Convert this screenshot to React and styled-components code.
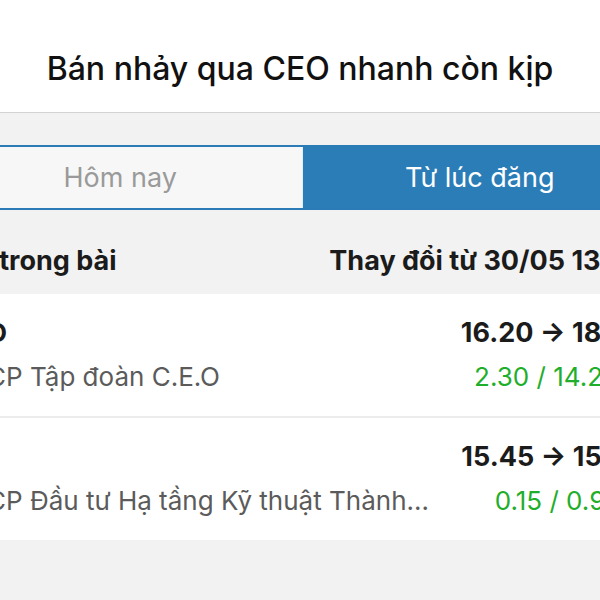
import React from 'react';
import styled, { createGlobalStyle } from 'styled-components';

const GlobalStyle = createGlobalStyle`
  body {
    margin: 0;
    background: #f2f2f2;
    font-family: Inter, "Noto Sans", sans-serif;
  }
`;

const stocks = [
  { code: 'CEO', name: 'CTCP Tập đoàn C.E.O', from: '16.20', to: '18.50', change: '2.30 / 14.20%' },
  { code: 'CII', name: 'CTCP Đầu tư Hạ tầng Kỹ thuật Thành phố Hồ Chí Minh', from: '15.45', to: '15.60', change: '0.15 / 0.97%' },
];

const App = () => {
  return (
    <Screen>
      <GlobalStyle />
      <TitleBar>
        <Title>Bán nhảy qua CEO nhanh còn kịp</Title>
      </TitleBar>
      <TabArea>
        <TabStrip>
          <Tab>Hôm nay</Tab>
          <Tab active>Từ lúc đăng</Tab>
        </TabStrip>
      </TabArea>
      <Table>
        <HeadRow>
          <HeadCell>Mã trong bài</HeadCell>
          <HeadCell right>Thay đổi từ 30/05 13:45</HeadCell>
        </HeadRow>
        {stocks.map((s) => (
          <Row key={s.code}>
            <LeftCol>
              <Code>{s.code}</Code>
              <Name>{s.name}</Name>
            </LeftCol>
            <RightCol>
              <Price>
                {s.from} → {s.to}
              </Price>
              <Change>{s.change}</Change>
            </RightCol>
          </Row>
        ))}
      </Table>
    </Screen>
  );
};

const Screen = styled.div`
  width: 600px;
  height: 600px;
  overflow: hidden;
  background: #f2f2f2;
`;

const TitleBar = styled.div`
  height: 113px;
  box-sizing: border-box;
  padding-top: 50px;
  background: #fff;
  border-bottom: 1px solid #d3d3d3;
  text-align: center;
`;

const Title = styled.h1`
  margin: 0;
  font-size: 32px;
  line-height: 38px;
  font-weight: 500;
  color: #111;
  white-space: nowrap;
`;

const TabArea = styled.div`
  padding-top: 32px;
`;

const TabStrip = styled.div`
  display: flex;
  margin-left: -61px;
  width: 726px;
  border-top: 2px solid #2b7bb6;
  border-bottom: 2px solid #2b7bb6;
`;

const Tab = styled.div`
  flex: 1;
  height: 61px;
  line-height: 61px;
  text-align: center;
  font-size: 27px;
  background: ${(p) => (p.active ? '#2b7db8' : '#f7f7f7')};
  color: ${(p) => (p.active ? '#fff' : '#9a9a9a')};
  border-left: ${(p) => (p.active ? '1px solid #e4eef6' : 'none')};
  text-indent: ${(p) => (p.active ? '-8px' : '0')};
`;

const Table = styled.div`
  margin: 0 -45px 0 -48px;
`;

const HeadRow = styled.div`
  display: flex;
  justify-content: space-between;
  height: 84px;
  box-sizing: border-box;
  padding: 34px 0 0;
`;

const HeadCell = styled.div`
  font-size: 27px;
  line-height: 33px;
  font-weight: 700;
  color: #1b1b1b;
  white-space: nowrap;
  text-align: ${(p) => (p.right ? 'right' : 'left')};
`;

const Row = styled.div`
  display: flex;
  gap: 28px;
  height: 124px;
  box-sizing: border-box;
  padding-top: 17px;
  background: #fff;
  border-bottom: 2px solid #ececec;

  &:last-child {
    border-bottom: none;
    height: 122px;
  }
`;

const LeftCol = styled.div`
  flex: 1;
  min-width: 0;
`;

const RightCol = styled.div`
  flex: none;
  text-align: right;
`;

const Code = styled.div`
  font-size: 26px;
  line-height: 44px;
  font-weight: 700;
  color: #1b1b1b;
`;

const Name = styled.div`
  font-size: 26px;
  line-height: 43px;
  color: #5b5b5b;
  white-space: nowrap;
  overflow: hidden;
  text-overflow: ellipsis;
`;

const Price = styled.div`
  font-size: 27px;
  line-height: 44px;
  font-weight: 700;
  color: #1b1b1b;
  white-space: nowrap;
`;

const Change = styled.div`
  font-size: 26px;
  line-height: 43px;
  color: #1fae2c;
  white-space: nowrap;
`;

export default App;
